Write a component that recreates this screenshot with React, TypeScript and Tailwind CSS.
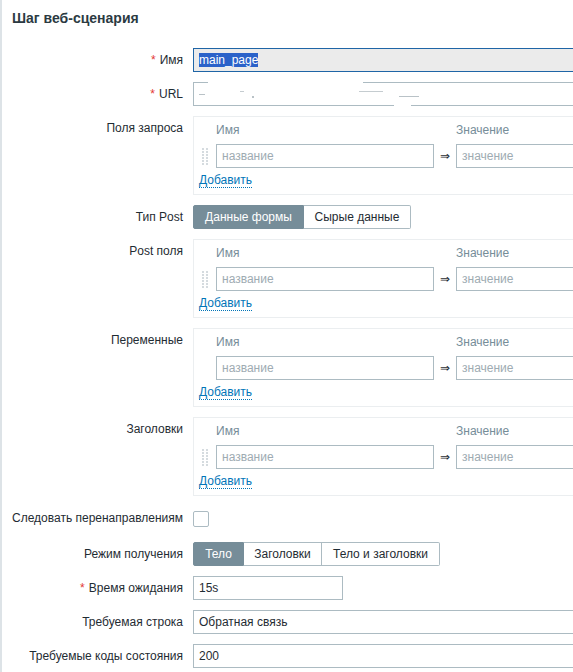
import type { ReactNode } from 'react';

const font = { fontFamily: '"Liberation Sans", Arial, sans-serif' };

function Label({ text, required }: { text: string; required?: boolean }) {
  return (
    <div className="w-[191px] shrink-0 pr-[10px] text-right leading-[24px] text-[#1f2c33] whitespace-nowrap">
      {required && <span className="text-[#e33734] mr-[4px]">*</span>}
      {text}
    </div>
  );
}

function Row({ label, required, h, children }: { label: string; required?: boolean; h?: string; children: ReactNode }) {
  return (
    <div className={`flex ${h ?? ''}`}>
      <Label text={label} required={required} />
      <div className="flex-1 min-w-0">{children}</div>
    </div>
  );
}

function Field({ value, w = 'w-[460px]' }: { value?: string; w?: string }) {
  return (
    <div className={`${w} h-[24px] border border-[#acbbc2] bg-white px-[5px] leading-[22px] text-[#1f2c33]`}>
      {value}
    </div>
  );
}

function Segments({ items, active }: { items: { label: string; w: string }[]; active: number }) {
  return (
    <div className="flex h-[24px]">
      {items.map((it, i) => (
        <div
          key={it.label}
          className={`${it.w} flex items-center justify-center border-y border-r ${i === 0 ? 'border-l rounded-l-[2px]' : ''} ${
            i === items.length - 1 ? 'rounded-r-[2px]' : ''
          } ${i === active ? 'bg-[#768d99] border-[#768d99] text-white' : 'bg-white border-[#acbbc2] text-[#1f2c33]'}`}
        >
          {it.label}
        </div>
      ))}
    </div>
  );
}

function DragHandle() {
  return (
    <div className="ml-[3px] grid grid-cols-2 gap-x-[2px] gap-y-[1px] w-[6px]">
      {Array.from({ length: 12 }).map((_, i) => (
        <div key={i} className="w-[2px] h-[2px] bg-[#d5dbdf]" />
      ))}
    </div>
  );
}

function PairTable({ handle = true }: { handle?: boolean }) {
  return (
    <div className="w-[540px] h-[79px] border border-[#ebeef0] px-[5px] pt-[5px] pb-[5px]">
      <div className="grid grid-cols-[17px_218px_22px_218px] leading-[16px] text-[#768d99]">
        <div />
        <div>Имя</div>
        <div />
        <div>Значение</div>
      </div>
      <div className="mt-[6px] grid grid-cols-[17px_218px_22px_218px] items-center">
        <div>{handle && <DragHandle />}</div>
        <div className="h-[24px] border border-[#acbbc2] px-[5px] leading-[22px] text-[#9eabb2]">название</div>
        <div className="text-center text-[#1f2c33]">⇒</div>
        <div className="h-[24px] border border-[#acbbc2] px-[5px] leading-[22px] text-[#9eabb2]">значение</div>
      </div>
      <div className="mt-[4px] leading-[17px]">
        <span className="text-[#0275b8] border-b border-dotted border-[#0275b8]">Добавить</span>
      </div>
    </div>
  );
}

export default function App() {
  return (
    <div className="relative w-[573px] h-[672px] overflow-hidden bg-white border-l-2 border-[#dde3e7] text-[12px]" style={font}>
      {/* nav marker on the sidebar edge */}
      <div className="absolute left-[-2px] top-[105px] w-[2px] h-[8px] bg-[#5c9bd6]" />

      <div className="h-[36px] pl-[10px] leading-[36px] text-[14px] font-bold text-[#2b3a42]">Шаг веб-сценария</div>

      <div className="pt-[12px] flex flex-col gap-[10px]">
        <Row label="Имя" required>
          <div className="w-[460px] h-[24px] border border-[#1f65a6] bg-[#ebebeb] px-[5px] leading-[22px]">
            <span className="bg-[#2b62c9] text-white">main_page</span>
          </div>
        </Row>

        <Row label="URL" required>
          <div className="relative w-[460px] h-[24px] border border-[#acbbc2] bg-white">
            {/* masked address */}
            <div className="absolute -top-[1px] left-[14px] w-[155px] h-[2px] bg-white" />
            <div className="absolute -bottom-[1px] left-[200px] w-[17px] h-[2px] bg-white" />
            <div className="absolute top-[11px] left-[5px] w-[6px] h-[1px] bg-[#b9c2c7]" />
            <div className="absolute top-[8px] left-[46px] w-[4px] h-[1px] bg-[#c5ccd0]" />
            <div className="absolute top-[13px] left-[58px] w-[2px] h-[2px] bg-[#b9c2c7]" />
            <div className="absolute top-[8px] left-[165px] w-[24px] h-[1px] bg-[#c5ccd0]" />
            <div className="absolute top-[13px] left-[205px] w-[20px] h-[1px] bg-[#b9c2c7]" />
          </div>
        </Row>

        <Row label="Поля запроса">
          <PairTable />
        </Row>

        <Row label="Тип Post">
          <Segments
            active={0}
            items={[
              { label: 'Данные формы', w: 'w-[111px]' },
              { label: 'Сырые данные', w: 'w-[107px]' },
            ]}
          />
        </Row>

        <Row label="Post поля">
          <PairTable />
        </Row>

        <Row label="Переменные">
          <PairTable handle={false} />
        </Row>

        <Row label="Заголовки">
          <PairTable />
        </Row>

        <Row label="Следовать перенаправлениям" h="h-[26px]">
          <div className="h-[26px] flex items-center">
            <div className="w-[16px] h-[16px] border border-[#acbbc2] rounded-[2px] bg-white" />
          </div>
        </Row>

        <Row label="Режим получения">
          <Segments
            active={0}
            items={[
              { label: 'Тело', w: 'w-[51px]' },
              { label: 'Заголовки', w: 'w-[78px]' },
              { label: 'Тело и заголовки', w: 'w-[118px]' },
            ]}
          />
        </Row>

        <Row label="Время ожидания" required>
          <Field value="15s" w="w-[150px]" />
        </Row>

        <Row label="Требуемая строка">
          <Field value="Обратная связь" />
        </Row>

        <Row label="Требуемые коды состояния">
          <Field value="200" />
        </Row>
      </div>
    </div>
  );
}
